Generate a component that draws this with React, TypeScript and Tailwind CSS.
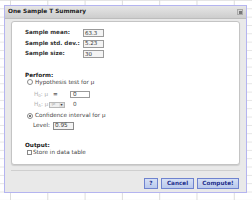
import React from "react";

function Radio({ checked }: { checked?: boolean }) {
  return (
    <span className="w-[6px] h-[6px] rounded-full border border-[#8a8a8a] bg-white flex items-center justify-center shrink-0">
      {checked && <span className="w-[2px] h-[2px] rounded-full bg-[#444]" />}
    </span>
  );
}

function Mu() {
  return <span className="font-['Liberation_Sans',sans-serif] text-[6.2px]">μ</span>;
}

export default function App() {
  return (
    <div
      className="w-[252px] h-[200px] overflow-hidden bg-white pt-[5px] pl-[4px] bg-[linear-gradient(to_right,#dcdcdc_1px,transparent_1px),linear-gradient(to_bottom,#e4e4e4_1px,transparent_1px)] bg-[size:37.3px_8.33px] bg-[position:10px_0px]"
      style={{ fontFamily: '"DejaVu Sans", Verdana, sans-serif' }}
    >
      <div className="w-[243px] h-[188px] border border-[#b4b4f0] bg-[#e9e9e9] flex flex-col">
        {/* title bar */}
        <div className="h-[13px] shrink-0 bg-[linear-gradient(to_bottom,#e6e6e6,#cdcdcd)] border-b border-[#bdbdbd] flex items-center justify-between pl-[3px] pr-[3px]">
          <span className="text-[5.8px] font-bold text-[#222] leading-none whitespace-nowrap">One Sample T Summary</span>
          <span className="w-[6px] h-[6px] bg-[#d4d4d4] border border-[#aaa] flex items-center justify-center">
            <span className="w-[3px] h-[3px] bg-[#777]" />
          </span>
        </div>
        {/* body */}
        <div className="flex-1 flex flex-col px-[6px] pt-[2px]">
          <div className="h-[144px] bg-white border border-[#c4c4c4] rounded-[3px] shadow-[0_1px_1px_rgba(0,0,0,0.12)] pl-[13px] pt-[6px] flex flex-col text-[#333]">
            {[
              ["Sample mean:", "63.3"],
              ["Sample std. dev.:", "5.23"],
              ["Sample size:", "30"],
            ].map(([l, v]) => (
              <div key={l} className="h-[10.5px] flex items-center">
                <span className="w-[58px] text-[5.6px] font-bold text-[#333] leading-none whitespace-nowrap">{l}</span>
                <span className="w-[21px] h-[8px] border border-[#9a9a9a] bg-[#f4f4f4] text-[5.5px] leading-none flex items-center pl-[1px] text-[#333]">{v}</span>
              </div>
            ))}
            <div className="h-[12px]" />
            <div className="text-[5.7px] font-bold leading-[7px] h-[7px] text-[#222]">Perform:</div>
            <div className="h-[7px] flex items-center gap-[2px] pl-[2px] text-[5.7px] leading-none text-[#444] whitespace-nowrap">
              <Radio />
              <span>Hypothesis test for <Mu /></span>
            </div>
            <div className="h-[5px]" />
            <div className="h-[8px] flex items-center pl-[9px] text-[5.7px] leading-none text-[#b0b0b0] whitespace-nowrap">
              <span className="w-[19px] whitespace-nowrap">H<sub className="text-[4px]">0</sub>: <Mu /></span>
              <span className="w-[17px] text-[#555] font-bold">=</span>
              <span className="w-[20px] h-[7px] border border-[#9a9a9a] bg-white text-[#333] flex items-center pl-[2px]">0</span>
            </div>
            <div className="h-[2px]" />
            <div className="h-[8px] flex items-center pl-[9px] text-[5.7px] leading-none text-[#b0b0b0] whitespace-nowrap">
              <span className="w-[15px] whitespace-nowrap">H<sub className="text-[4px]">A</sub>: <Mu /></span>
              <span className="w-[16px] h-[6px] border border-[#b8b8b8] bg-[#efefef] flex items-center justify-between pl-[1px]">
                <span className="text-[#c0c0c0]">≠</span>
                <span className="w-[5px] h-[4px] bg-[#e0e0e0] text-[4px] text-[#333] flex items-center justify-center">▾</span>
              </span>
              <span className="ml-[8px] text-[#555]">0</span>
            </div>
            <div className="h-[3px]" />
            <div className="h-[8px] flex items-center gap-[2px] pl-[2px] text-[5.7px] leading-none text-[#444] whitespace-nowrap">
              <Radio checked />
              <span>Confidence interval for <Mu /></span>
            </div>
            <div className="h-[2px]" />
            <div className="h-[9px] flex items-center pl-[8px] text-[5.7px] leading-none text-[#444]">
              <span className="w-[20px]">Level:</span>
              <span className="w-[21px] h-[8px] border border-[#8a8a8a] bg-[#f4f4f4] flex items-center pl-[1px] text-[#333]">0.95</span>
            </div>
            <div className="h-[11px]" />
            <div className="text-[5.7px] font-bold leading-[7px] h-[7px] text-[#222]">Output:</div>
            <div className="h-[8px] flex items-center gap-[1px] pl-[2px] text-[5.7px] leading-none text-[#444] whitespace-nowrap">
              <span className="w-[5px] h-[5px] border border-[#888] bg-white shrink-0" />
              <span>Store in data table</span>
            </div>
          </div>
          <div className="mt-[5px] border-t border-[#cfcfcf]" />
          <div className="flex justify-end gap-[3px] mt-[7px] pr-[1px]">
            {["?", "Cancel", "Compute!"].map((b) => (
              <span
                key={b}
                className={`h-[11px] border border-[#6f83cf] bg-[linear-gradient(to_bottom,#d6e0f5,#b9c9ec)] text-[5.7px] font-bold text-[#1e2f8c] flex items-center justify-center leading-none whitespace-nowrap ${
                  b === "?" ? "w-[14px]" : b === "Cancel" ? "w-[33px]" : "w-[42px]"
                }`}
              >
                {b}
              </span>
            ))}
          </div>
        </div>
      </div>
    </div>
  );
}
